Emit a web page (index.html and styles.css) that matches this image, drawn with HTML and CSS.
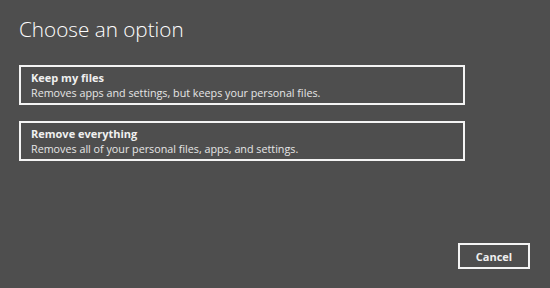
FILE: index.html
```html
<!DOCTYPE html>
<html lang="en">

<head>
    <meta charset="UTF-8">
    <title>Choose an option</title>
    <link rel="stylesheet" href="styles.css">
</head>

<body>
    <div class="screen">
        <h1 class="title">Choose an option</h1>

        <div class="options">
            <button class="option">
                <span class="option-name">Keep my files</span>
                <span class="option-desc">Removes apps and settings, but keeps your personal files.</span>
            </button>
            <button class="option">
                <span class="option-name">Remove everything</span>
                <span class="option-desc">Removes all of your personal files, apps, and settings.</span>
            </button>
        </div>

        <div class="footer">
            <button class="cancel-button">Cancel</button>
        </div>
    </div>
</body>

</html>
```

FILE: styles.css
```css
body {
    margin: 0;
    padding: 0;
    background-color: #4e4e4e;
    color: #ffffff;
    font-family: "Open Sans", "Noto Sans", sans-serif;
}

.screen {
    width: 550px;
    height: 288px;
    box-sizing: border-box;
    padding: 14px 20px 19px 19px;
    display: flex;
    flex-direction: column;
}

.title {
    margin: 0;
    font-size: 20.7px;
    font-weight: 300;
    line-height: 30px;
}

.options {
    margin-top: 21px;
    display: flex;
    flex-direction: column;
    gap: 16px;
}

.option {
    width: 446px;
    height: 40px;
    box-sizing: border-box;
    padding: 3px 10px 0;
    background: transparent;
    border: 2px solid #f4f4f4;
    color: #f0f0f0;
    font-family: inherit;
    text-align: left;
    display: flex;
    flex-direction: column;
    cursor: pointer;
}

.option-name {
    font-size: 11px;
    font-weight: 700;
    line-height: 15px;
}

.option-desc {
    font-size: 10.75px;
    line-height: 16px;
    color: #e6e6e6;
}

.footer {
    margin-top: auto;
    display: flex;
    justify-content: flex-end;
}

.cancel-button {
    width: 72px;
    height: 26px;
    background: transparent;
    border: 2px solid #f4f4f4;
    color: #f0f0f0;
    font-family: inherit;
    font-size: 11px;
    font-weight: 700;
    cursor: pointer;
}
```
